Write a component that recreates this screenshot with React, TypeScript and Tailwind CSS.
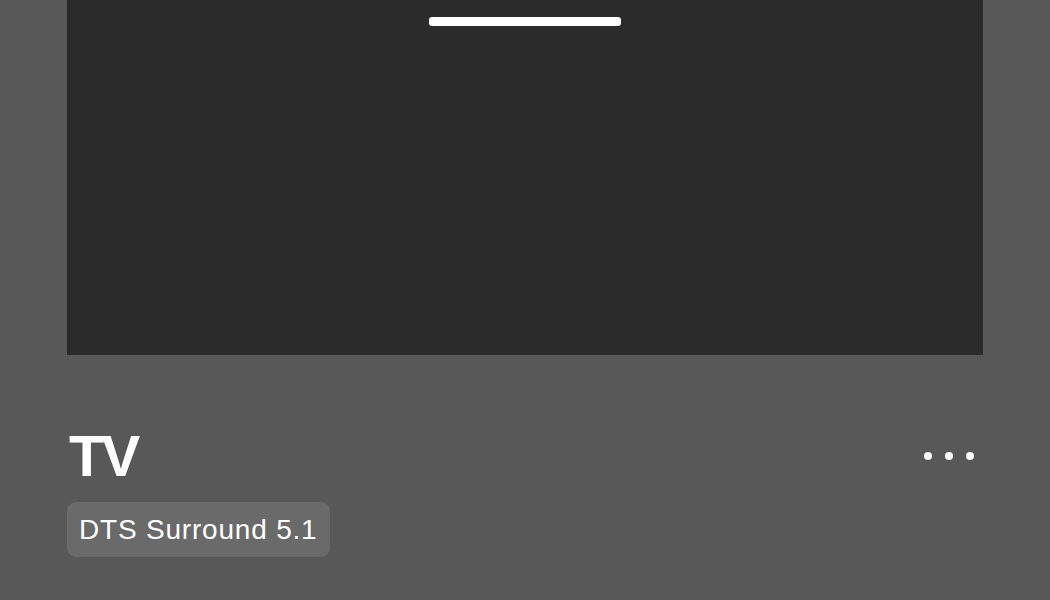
export default function App() {
  return (
    <div
      className="w-[1050px] h-[600px] overflow-hidden bg-[#585858] px-[67px]"
      style={{ fontFamily: '"Liberation Sans", Arial, sans-serif' }}
    >
      <div className="h-[355px] bg-[#2b2b2b] flex justify-center">
        <div className="mt-[17px] w-[192px] h-[9px] rounded-[3px] bg-white" />
      </div>

      <div className="mt-[72px] flex items-center justify-between">
        <h1 className="ml-[2px] text-[58px] leading-none font-bold tracking-[-3px] text-white">TV</h1>
        <div className="mr-[9px] flex items-center gap-[13px]">
          <span className="w-2 h-2 rounded-full bg-white" />
          <span className="w-2 h-2 rounded-full bg-white" />
          <span className="w-2 h-2 rounded-full bg-white" />
        </div>
      </div>

      <div className="mt-[17px] inline-flex h-[55px] items-center rounded-[9px] bg-[#6a6a6a] pl-3 pr-[13px]">
        <span className="text-[28px] leading-none tracking-[0.8px] text-white">
          DTS Surround 5.1
        </span>
      </div>
    </div>
  );
}
